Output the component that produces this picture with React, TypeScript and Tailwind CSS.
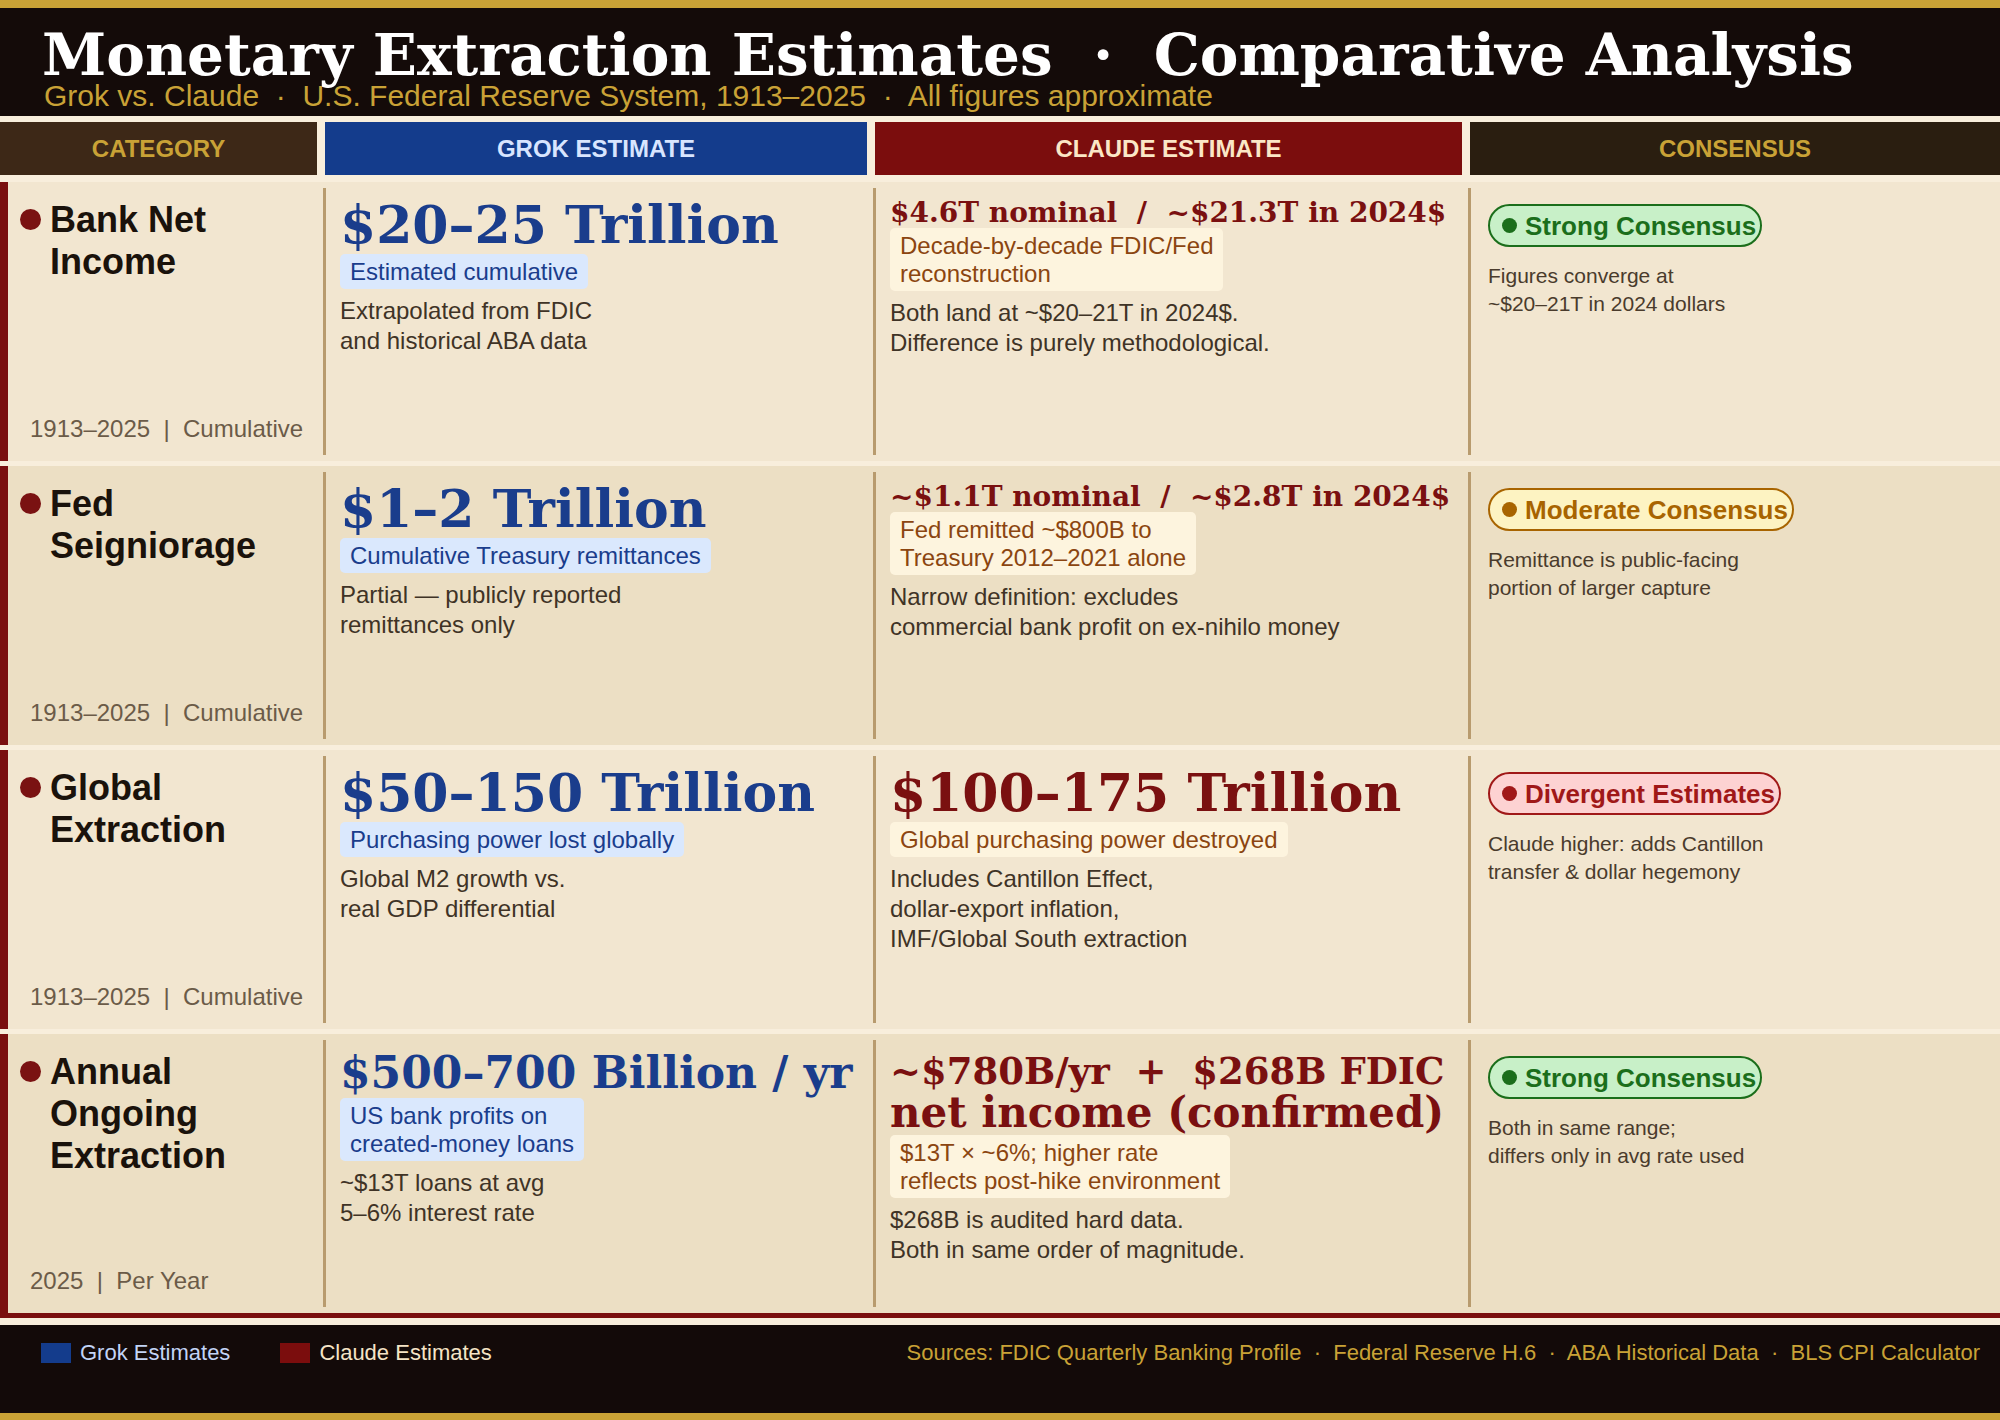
import React from 'react';

type Level = 'strong' | 'moderate' | 'divergent';

interface Estimate {
  value: string[];
  size: string;
  tag: string[];
  desc: string[];
}

interface Row {
  title: string[];
  meta: string;
  grok: Estimate;
  claude: Estimate;
  consensus: { level: Level; desc: string[] };
}

const rows: Row[] = [
  {
    title: ['Bank Net', 'Income'],
    meta: '1913–2025  |  Cumulative',
    grok: {
      value: ['$20–25 Trillion'],
      size: 'big',
      tag: ['Estimated cumulative'],
      desc: ['Extrapolated from FDIC', 'and historical ABA data'],
    },
    claude: {
      value: ['$4.6T nominal  /  ~$21.3T in 2024$'],
      size: 'small',
      tag: ['Decade-by-decade FDIC/Fed', 'reconstruction'],
      desc: ['Both land at ~$20–21T in 2024$.', 'Difference is purely methodological.'],
    },
    consensus: { level: 'strong', desc: ['Figures converge at', '~$20–21T in 2024 dollars'] },
  },
  {
    title: ['Fed', 'Seigniorage'],
    meta: '1913–2025  |  Cumulative',
    grok: {
      value: ['$1–2 Trillion'],
      size: 'big',
      tag: ['Cumulative Treasury remittances'],
      desc: ['Partial — publicly reported', 'remittances only'],
    },
    claude: {
      value: ['~$1.1T nominal  /  ~$2.8T in 2024$'],
      size: 'small',
      tag: ['Fed remitted ~$800B to', 'Treasury 2012–2021 alone'],
      desc: ['Narrow definition: excludes', 'commercial bank profit on ex-nihilo money'],
    },
    consensus: { level: 'moderate', desc: ['Remittance is public-facing', 'portion of larger capture'] },
  },
  {
    title: ['Global', 'Extraction'],
    meta: '1913–2025  |  Cumulative',
    grok: {
      value: ['$50–150 Trillion'],
      size: 'big',
      tag: ['Purchasing power lost globally'],
      desc: ['Global M2 growth vs.', 'real GDP differential'],
    },
    claude: {
      value: ['$100–175 Trillion'],
      size: 'big',
      tag: ['Global purchasing power destroyed'],
      desc: ['Includes Cantillon Effect,', 'dollar-export inflation,', 'IMF/Global South extraction'],
    },
    consensus: { level: 'divergent', desc: ['Claude higher: adds Cantillon', 'transfer & dollar hegemony'] },
  },
  {
    title: ['Annual', 'Ongoing', 'Extraction'],
    meta: '2025  |  Per Year',
    grok: {
      value: ['$500–700 Billion / yr'],
      size: 'mid',
      tag: ['US bank profits on', 'created-money loans'],
      desc: ['~$13T loans at avg', '5–6% interest rate'],
    },
    claude: {
      value: ['~$780B/yr  +  $268B FDIC', 'net income (confirmed)'],
      size: 'wrap',
      tag: ['$13T × ~6%; higher rate', 'reflects post-hike environment'],
      desc: ['$268B is audited hard data.', 'Both in same order of magnitude.'],
    },
    consensus: { level: 'strong', desc: ['Both in same range;', 'differs only in avg rate used'] },
  },
];

const badgeStyles: Record<Level, { label: string; box: string; dot: string }> = {
  strong: {
    label: 'Strong Consensus',
    box: 'bg-[#c8f0c8] border-[#1b6e1b] text-[#1b6e1b]',
    dot: 'bg-[#1b6e1b]',
  },
  moderate: {
    label: 'Moderate Consensus',
    box: 'bg-[#fdf3c2] border-[#a86400] text-[#a86400]',
    dot: 'bg-[#a86400]',
  },
  divergent: {
    label: 'Divergent Estimates',
    box: 'bg-[#fdd2d2] border-[#a01818] text-[#a01818]',
    dot: 'bg-[#a01818]',
  },
};

const valueClass: Record<string, string> = {
  big: 'text-[52px] leading-none',
  mid: 'text-[44px] leading-none',
  small: 'text-[28px] leading-none',
};

function Lines({ lines }: { lines: string[] }) {
  return (
    <>
      {lines.map((l, i) => (
        <React.Fragment key={i}>
          {i > 0 && <br />}
          {l}
        </React.Fragment>
      ))}
    </>
  );
}

function EstimateCell({ data, side }: { data: Estimate; side: 'grok' | 'claude' }) {
  const isGrok = side === 'grok';
  const color = isGrok ? 'text-[#1a3d8c]' : 'text-[#7a1010]';

  return (
    <div className="my-[6px] border-l-[3px] border-[#b89b6e] pl-[14px] pt-[11px]">
      {data.size === 'wrap' ? (
        // two-line headline: second line is set a touch larger
        <div className={`font-['DejaVu_Serif',serif] font-bold whitespace-pre ${color}`}>
          <div className="text-[37px] leading-[40px]">{data.value[0]}</div>
          <div className="text-[42px] leading-[44px]">{data.value[1]}</div>
        </div>
      ) : (
        <div
          className={`font-['DejaVu_Serif',serif] font-bold whitespace-pre ${valueClass[data.size]} ${color}`}
        >
          {data.value[0]}
        </div>
      )}
      <div
        className={`w-fit rounded-[5px] px-[10px] py-[3.5px] text-[24px] leading-[28px] ${
          data.size === 'small' ? 'mt-[1px]' : data.size === 'wrap' ? 'mt-0' : 'mt-[3px]'
        } ${isGrok ? 'bg-[#dae8fd] text-[#1a3d8c]' : 'bg-[#fdf4de] text-[#8b4510]'}`}
      >
        <Lines lines={data.tag} />
      </div>
      <p className="mt-[7px] text-[24px] leading-[30px] text-[#3f3326]">
        <Lines lines={data.desc} />
      </p>
    </div>
  );
}

function ConsensusCell({ data }: { data: Row['consensus'] }) {
  const b = badgeStyles[data.level];
  return (
    <div className="my-[6px] border-l-[3px] border-[#b89b6e] pl-[17px] pt-[16px]">
      <div
        className={`inline-flex h-[43px] items-center rounded-full border-2 pl-[12px] pr-[4px] ${b.box}`}
      >
        <span className={`h-[15px] w-[15px] rounded-full ${b.dot}`} />
        <span className="ml-[8px] text-[26px] font-bold leading-none">{b.label}</span>
      </div>
      <p className="mt-[15px] text-[21px] leading-[28px] text-[#4a3b2c]">
        <Lines lines={data.desc} />
      </p>
    </div>
  );
}

export default function App() {
  return (
    <div className="flex h-[1420px] w-[2000px] flex-col overflow-hidden bg-[#f8eedc] font-['Liberation_Sans',Arial,sans-serif]">
      <div className="h-[8px] shrink-0 bg-[#c9a236]" />

      <header className="h-[108px] shrink-0 bg-[#140b09] pl-[42px] pt-[18px]">
        <h1 className="whitespace-pre font-['DejaVu_Serif',serif] text-[58px] font-bold leading-none text-white">
          Monetary Extraction Estimates  ·  Comparative Analysis
        </h1>
        <p className="-mt-[3px] ml-[2px] whitespace-pre text-[30px] leading-none text-[#c9a236]">
          Grok vs. Claude  ·  U.S. Federal Reserve System, 1913–2025  ·  All figures approximate
        </p>
      </header>

      <div className="mt-[6px] grid h-[53px] shrink-0 grid-cols-[317px_542px_587px_530px] gap-x-[8px] text-[24px] font-bold">
        <div className="flex items-center justify-center bg-[#3d2817] text-[#c9a236]">CATEGORY</div>
        <div className="flex items-center justify-center bg-[#143c8c] text-[#d8e5ff]">GROK ESTIMATE</div>
        <div className="flex items-center justify-center bg-[#7b0d0d] text-[#fbe7c6]">CLAUDE ESTIMATE</div>
        <div className="flex items-center justify-center bg-[#2a1e10] text-[#c9a236]">CONSENSUS</div>
      </div>

      <div className="mt-[7px] flex shrink-0 flex-col gap-[5px]">
        {rows.map((row, i) => (
          <div
            key={i}
            className={`grid h-[279px] grid-cols-[323px_550px_595px_532px] ${
              i % 2 === 0 ? 'bg-[#f2e6d0]' : 'bg-[#ecdfc4]'
            }`}
          >
            <div className="flex flex-col justify-between border-l-[8px] border-[#7a0f0f] py-[17px] pl-[12px]">
              <div className="flex items-start gap-[10px]">
                <span className="mt-[10px] h-[21px] w-[21px] shrink-0 rounded-full bg-[#7a1212]" />
                <h2 className="-ml-[1px] text-[36px] font-bold leading-[42px] text-[#1a120b]">
                  <Lines lines={row.title} />
                </h2>
              </div>
              <div className="ml-[10px] whitespace-pre text-[24px] leading-[30px] text-[#6b5b48]">
                {row.meta}
              </div>
            </div>
            <EstimateCell data={row.grok} side="grok" />
            <EstimateCell data={row.claude} side="claude" />
            <ConsensusCell data={row.consensus} />
          </div>
        ))}
      </div>

      <div className="h-[5px] shrink-0 bg-[#7a0f0f]" />

      <footer className="mt-[7px] flex h-[88px] shrink-0 items-start justify-between bg-[#130a09] pl-[41px] pr-[20px] pt-[18px] text-[22px] leading-[20px]">
        <div className="flex items-center">
          <span className="h-[20px] w-[30px] bg-[#143c8c]" />
          <span className="ml-[9px] text-[#c2d4f6]">Grok Estimates</span>
          <span className="ml-[50px] h-[20px] w-[30px] bg-[#7b0d0d]" />
          <span className="ml-[9px] text-[#f5e4c6]">Claude Estimates</span>
        </div>
        <div className="whitespace-pre text-[#c9a236]">
          Sources: FDIC Quarterly Banking Profile  ·  Federal Reserve H.6  ·  ABA Historical Data  ·  BLS CPI Calculator
        </div>
      </footer>

      <div className="h-[7px] shrink-0 bg-[#c9a236]" />
    </div>
  );
}
